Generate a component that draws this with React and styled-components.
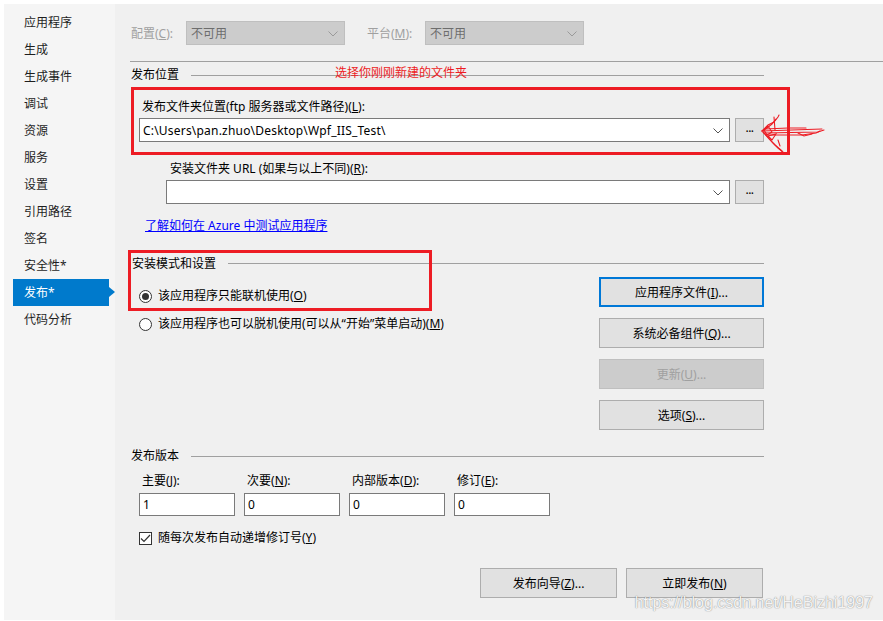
import React from "react";
import styled, { createGlobalStyle } from "styled-components";

const FONT = `"Segoe UI", "Noto Sans", "Noto Sans CJK SC", sans-serif`;

const Global = createGlobalStyle`
  html, body { margin: 0; padding: 0; background: #ffffff; }
  body { font-family: ${FONT}; font-size: 12px; color: #000; }
  * { box-sizing: border-box; }
`;

const Frame = styled.div`
  display: flex;
  width: 883px;
  height: 621px;
  padding: 4px 0 1px 4px;
  overflow: hidden;
`;

const Sidebar = styled.nav`
  width: 111px;
  flex: none;
  background: #f5f5f5;
  padding-top: 5px;
  display: flex;
  flex-direction: column;
`;

const NavItem = styled.div`
  position: relative;
  height: 27px;
  line-height: 27px;
  margin-left: 9px;
  width: 96px;
  padding-left: 11px;
  font-size: 12px;
  color: ${(p) => (p.$active ? "#fff" : "#1e1e1e")};
  background: ${(p) => (p.$active ? "#007acc" : "transparent")};
  &::after {
    content: "";
    display: ${(p) => (p.$active ? "block" : "none")};
    position: absolute;
    right: -6px;
    top: 8px;
    border-left: 6px solid #007acc;
    border-top: 5.5px solid transparent;
    border-bottom: 5.5px solid transparent;
  }
`;

const Main = styled.main`
  position: relative;
  flex: 1;
  background: #f0f0f0;
  padding: 17px 119px 0 16px;
  display: flex;
  flex-direction: column;
`;

const TopRow = styled.div`
  display: flex;
  align-items: center;
  height: 24px;
`;

const DimLabel = styled.span`
  width: ${(p) => p.$w}px;
  margin-left: ${(p) => p.$ml || 0}px;
  color: #a0a0a0;
  line-height: 16px;
  padding-top: 1px;
`;

const ComboBox = styled.div`
  position: relative;
  display: flex;
  align-items: center;
  height: 24px;
  width: ${(p) => (p.$w ? `${p.$w}px` : "auto")};
  flex: ${(p) => (p.$w ? "none" : "1")};
  padding-left: ${(p) => (p.$disabled ? 4 : 3)}px;
  background: ${(p) => (p.$disabled ? "#cccccc" : "#ffffff")};
  border: 1px solid ${(p) => (p.$disabled ? "#bfbfbf" : "#7a7a7a")};
  color: ${(p) => (p.$disabled ? "#6d6d6d" : "#000")};
  white-space: nowrap;
  letter-spacing: ${(p) => (p.$disabled ? 0 : 0.2)}px;
`;

const Chevron = styled.svg`
  position: absolute;
  right: 6px;
  top: 9px;
`;

const Separator = styled.div`
  height: 1px;
  background: #a0a0a0;
  margin: 16px -119px 0 -1px;
`;

const GroupHeader = styled.div`
  display: flex;
  align-items: center;
  height: 16px;
  margin-top: ${(p) => p.$mt}px;
  margin-left: ${(p) => p.$ml || 0}px;
  line-height: 16px;
  &::after {
    content: "";
    flex: 1;
    height: 1px;
    background: #a0a0a0;
    margin-left: 12px;
    margin-top: ${(p) => p.$lineOffset || 1}px;
  }
`;

const FieldLabel = styled.div`
  line-height: 16px;
  margin-top: ${(p) => p.$mt}px;
  margin-left: ${(p) => p.$ml}px;
  white-space: nowrap;
`;

const ComboRow = styled.div`
  display: flex;
  align-items: center;
  gap: 5px;
  margin-top: 3px;
  margin-left: ${(p) => p.$ml}px;
`;

const SmallButton = styled.button`
  width: 29px;
  height: 24px;
  flex: none;
  padding: 0 0 6px;
  background: #e1e1e1;
  border: 1px solid #adadad;
  font-family: ${FONT};
  font-size: 12px;
  color: #000;
  letter-spacing: -0.5px;
`;

const Link = styled.a`
  display: block;
  margin-top: 14px;
  margin-left: 14px;
  line-height: 16px;
  color: #0000ff;
  text-decoration: underline;
  cursor: pointer;
`;

const ModeSection = styled.div`
  display: flex;
  justify-content: space-between;
  margin-top: 5px;
`;

const RadioList = styled.div`
  display: flex;
  flex-direction: column;
  gap: 12px;
  padding-top: 11px;
  margin-left: 8px;
`;

const OptionRow = styled.label`
  display: flex;
  align-items: center;
  gap: 6px;
  line-height: 16px;
  white-space: nowrap;
`;

const Radio = styled.span`
  width: 13px;
  height: 13px;
  border-radius: 50%;
  border: 1px solid #333;
  background: #fff;
  display: flex;
  align-items: center;
  justify-content: center;
  flex: none;
  &::after {
    content: "";
    width: 7px;
    height: 7px;
    border-radius: 50%;
    background: #333;
    display: ${(p) => (p.$checked ? "block" : "none")};
  }
`;

const Check = styled.span`
  width: 13px;
  height: 13px;
  border: 1px solid #333;
  background: #fff;
  display: flex;
  align-items: center;
  justify-content: center;
  flex: none;
`;

const ButtonColumn = styled.div`
  display: flex;
  flex-direction: column;
  gap: 11px;
`;

const PushButton = styled.button`
  width: ${(p) => p.$w}px;
  height: 30px;
  flex: none;
  background: ${(p) => (p.$disabled ? "#cccccc" : "#e1e1e1")};
  border: ${(p) =>
    p.$focused ? "2px solid #0078d7" : p.$disabled ? "1px solid #bfbfbf" : "1px solid #adadad"};
  color: ${(p) => (p.$disabled ? "#a0a0a0" : "#000")};
  font-family: ${FONT};
  font-size: 12px;
  padding: 0;
`;

const VersionGrid = styled.div`
  display: grid;
  grid-template-columns: repeat(4, 96px);
  column-gap: 9px;
  row-gap: 4px;
  margin-top: 9px;
  margin-left: 8px;
`;

const GridLabel = styled.span`
  line-height: 16px;
  padding-left: 3px;
`;

const TextBox = styled.div`
  height: 23px;
  background: #fff;
  border: 1px solid #7a7a7a;
  padding-left: 3px;
  display: flex;
  align-items: center;
`;

const CheckRow = styled(OptionRow)`
  margin-top: 14px;
  margin-left: 8px;
`;

const Footer = styled.div`
  display: flex;
  justify-content: flex-end;
  gap: 9px;
  margin-top: 22px;
  margin-right: 1px;
`;

/* annotation overlays drawn on top of the screenshot */
const RedBox = styled.div`
  position: absolute;
  left: ${(p) => p.$x}px;
  top: ${(p) => p.$y}px;
  width: ${(p) => p.$w}px;
  height: ${(p) => p.$h}px;
  border: 3px solid #ed1c24;
  pointer-events: none;
`;

const RedNote = styled.span`
  position: absolute;
  left: 220px;
  top: 61px;
  color: #ed1c24;
  font-size: 12px;
  line-height: 16px;
  white-space: nowrap;
`;

const Arrow = styled.svg`
  position: absolute;
  left: 643px;
  top: 106px;
`;

const Watermark = styled.span`
  position: absolute;
  right: 10px;
  bottom: 8px;
  font-family: "Liberation Sans", Arial, sans-serif;
  font-size: 16px;
  line-height: 18px;
  color: rgba(255, 255, 255, 0.92);
  text-shadow: 0 0 1px rgba(0, 0, 0, 0.45), 0 0 2px rgba(0, 0, 0, 0.15);
  white-space: nowrap;
`;

const ChevronIcon = ({ disabled }) => (
  <Chevron width="10" height="6" viewBox="0 0 10 6">
    <polyline
      points="0.5,0.5 5,5 9.5,0.5"
      fill="none"
      stroke={disabled ? "#9a9a9a" : "#555"}
      strokeWidth="1"
    />
  </Chevron>
);

const navItems = [
  "应用程序",
  "生成",
  "生成事件",
  "调试",
  "资源",
  "服务",
  "设置",
  "引用路径",
  "签名",
  "安全性*",
  "发布*",
  "代码分析",
];

const versions = [
  { label: "主要", key: "J", value: "1" },
  { label: "次要", key: "N", value: "0" },
  { label: "内部版本", key: "D", value: "0" },
  { label: "修订", key: "E", value: "0" },
];

export default function App() {
  return (
    <>
      <Global />
      <Frame>
        <Sidebar>
          {navItems.map((n) => (
            <NavItem key={n} $active={n === "发布*"}>
              {n}
            </NavItem>
          ))}
        </Sidebar>
        <Main>
          <TopRow>
            <DimLabel $w={55}>
              配置(<u>C</u>):
            </DimLabel>
            <ComboBox $w={159} $disabled>
              不可用
              <ChevronIcon disabled />
            </ComboBox>
            <DimLabel $w={58} $ml={22}>
              平台(<u>M</u>):
            </DimLabel>
            <ComboBox $w={159} $disabled>
              不可用
              <ChevronIcon disabled />
            </ComboBox>
          </TopRow>
          <Separator />

          <GroupHeader $mt={5}>发布位置</GroupHeader>
          <FieldLabel $mt={16} $ml={11}>
            发布文件夹位置(ftp 服务器或文件路径)(<u>L</u>):
          </FieldLabel>
          <ComboRow $ml={8}>
            <ComboBox>
              C:\Users\pan.zhuo\Desktop\Wpf_IIS_Test\
              <ChevronIcon />
            </ComboBox>
            <SmallButton>...</SmallButton>
          </ComboRow>
          <FieldLabel $mt={19} $ml={39}>
            安装文件夹 URL (如果与以上不同)(<u>R</u>):
          </FieldLabel>
          <ComboRow $ml={35}>
            <ComboBox>
              <ChevronIcon />
            </ComboBox>
            <SmallButton>...</SmallButton>
          </ComboRow>
          <Link>了解如何在 Azure 中测试应用程序</Link>

          <GroupHeader $mt={22} $ml={1} $lineOffset={-1}>
            安装模式和设置
          </GroupHeader>
          <ModeSection>
            <RadioList>
              <OptionRow>
                <Radio $checked />
                <span>
                  该应用程序只能联机使用(<u>O</u>)
                </span>
              </OptionRow>
              <OptionRow>
                <Radio />
                <span>
                  该应用程序也可以脱机使用(可以从“开始”菜单启动)(<u>M</u>)
                </span>
              </OptionRow>
            </RadioList>
            <ButtonColumn>
              <PushButton $w={165} $focused>
                应用程序文件(<u>I</u>)...
              </PushButton>
              <PushButton $w={165}>
                系统必备组件(<u>Q</u>)...
              </PushButton>
              <PushButton $w={165} $disabled>
                更新(<u>U</u>)...
              </PushButton>
              <PushButton $w={165}>
                选项(<u>S</u>)...
              </PushButton>
            </ButtonColumn>
          </ModeSection>

          <GroupHeader $mt={18}>发布版本</GroupHeader>
          <VersionGrid>
            {versions.map((v) => (
              <GridLabel key={v.key}>
                {v.label}(<u>{v.key}</u>):
              </GridLabel>
            ))}
            {versions.map((v) => (
              <TextBox key={v.key + "box"}>{v.value}</TextBox>
            ))}
          </VersionGrid>
          <CheckRow>
            <Check>
              <svg width="11" height="9" viewBox="0 0 11 9">
                <polyline points="1,4.5 4,7.5 10,1" fill="none" stroke="#333" strokeWidth="1.2" />
              </svg>
            </Check>
            <span>
              随每次发布自动递增修订号(<u>Y</u>)
            </span>
          </CheckRow>
          <Footer>
            <PushButton $w={137}>
              发布向导(<u>Z</u>)...
            </PushButton>
            <PushButton $w={137}>
              立即发布(<u>N</u>)
            </PushButton>
          </Footer>

          <RedNote>选择你刚刚新建的文件夹</RedNote>
          <RedBox $x={16} $y={83} $w={659} $h={68} />
          <RedBox $x={13} $y={246} $w={304} $h={61} />
          <Arrow width="68" height="48" viewBox="0 0 68 48">
            <g fill="none" stroke="#ed1c24" strokeWidth="1.1" strokeLinecap="round">
              <polyline points="4,21 10,15 16,12 20,7 21,5" />
              <polyline points="4,21 9,18 14,14 18,9" />
              <polyline points="5,22 10,27 15,33 20,38 26,43" />
              <polyline points="5,22 11,29 17,35 24,41" />
              <polyline points="4,21 64,19" />
              <polyline points="6,23 60,22 66,20" />
              <polyline points="8,25 44,25 58,23 62,21" />
              <polyline points="7,19 30,18 48,18" />
              <polyline points="6,20 10,16 14,22 9,25 6,20" />
              <polyline points="10,26 18,24 14,30 10,26" />
              <polyline points="40,23 46,26 54,24" />
              <polyline points="16,7 17,20" />
              <polyline points="20,30 22,36" />
            </g>
          </Arrow>
          <Watermark>https://blog.csdn.net/HeBizhi1997</Watermark>
        </Main>
      </Frame>
    </>
  );
}
